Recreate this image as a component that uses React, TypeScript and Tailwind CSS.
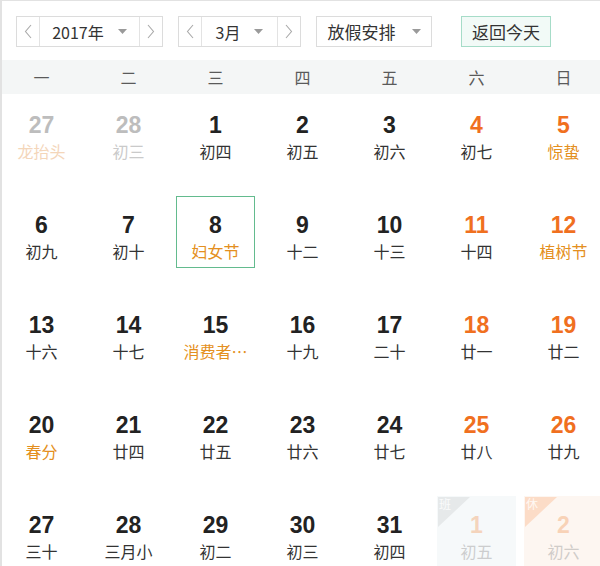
import React from "react";

type Day = {
  n: number;
  lunar: string;
  other?: boolean; // day of prev/next month
  fest?: boolean; // lunar text is a festival / solar term
  weekend?: boolean;
  selected?: boolean;
  badge?: "班" | "休";
};

const weekdays = ["一", "二", "三", "四", "五", "六", "日"];

const rows: Day[][] = [
  [
    { n: 27, lunar: "龙抬头", other: true, fest: true },
    { n: 28, lunar: "初三", other: true },
    { n: 1, lunar: "初四" },
    { n: 2, lunar: "初五" },
    { n: 3, lunar: "初六" },
    { n: 4, lunar: "初七", weekend: true },
    { n: 5, lunar: "惊蛰", weekend: true, fest: true },
  ],
  [
    { n: 6, lunar: "初九" },
    { n: 7, lunar: "初十" },
    { n: 8, lunar: "妇女节", fest: true, selected: true },
    { n: 9, lunar: "十二" },
    { n: 10, lunar: "十三" },
    { n: 11, lunar: "十四", weekend: true },
    { n: 12, lunar: "植树节", weekend: true, fest: true },
  ],
  [
    { n: 13, lunar: "十六" },
    { n: 14, lunar: "十七" },
    { n: 15, lunar: "消费者…", fest: true },
    { n: 16, lunar: "十九" },
    { n: 17, lunar: "二十" },
    { n: 18, lunar: "廿一", weekend: true },
    { n: 19, lunar: "廿二", weekend: true },
  ],
  [
    { n: 20, lunar: "春分", fest: true },
    { n: 21, lunar: "廿四" },
    { n: 22, lunar: "廿五" },
    { n: 23, lunar: "廿六" },
    { n: 24, lunar: "廿七" },
    { n: 25, lunar: "廿八", weekend: true },
    { n: 26, lunar: "廿九", weekend: true },
  ],
  [
    { n: 27, lunar: "三十" },
    { n: 28, lunar: "三月小" },
    { n: 29, lunar: "初二" },
    { n: 30, lunar: "初三" },
    { n: 31, lunar: "初四" },
    { n: 1, lunar: "初五", other: true, weekend: true, badge: "班" },
    { n: 2, lunar: "初六", other: true, weekend: true, badge: "休" },
  ],
];

const Chevron = ({ dir }: { dir: "left" | "right" }) => (
  <svg width="8" height="15" viewBox="0 0 8 15" fill="none">
    <polyline
      points={dir === "left" ? "7,1 1.5,7.5 7,14" : "1,1 6.5,7.5 1,14"}
      stroke="#a9a9a9"
      strokeWidth="1.1"
    />
  </svg>
);

const Caret = () => (
  <svg width="9" height="5" viewBox="0 0 9 5">
    <polygon points="0,0 9,0 4.5,5" fill="#9a9a9a" />
  </svg>
);

const Picker = ({ label, textW }: { label: string; textW: string }) => (
  <div className="flex h-[31px] border border-[#dcdcdc] bg-white">
    <div className="flex w-[23px] items-center justify-center border-r border-[#e3e3e3]">
      <Chevron dir="left" />
    </div>
    <div className={`flex items-center justify-center gap-[14px] ${textW}`}>
      <span className="text-[16px] text-[#333]">{label}</span>
      <Caret />
    </div>
    <div className="flex w-[23px] items-center justify-center border-l border-[#e3e3e3]">
      <Chevron dir="right" />
    </div>
  </div>
);

const DayCell = ({ d }: { d: Day }) => {
  let numColor = "text-[#222]";
  let lunarColor = "text-[#333]";
  if (d.weekend) numColor = "text-[#f0701f]";
  if (d.fest) lunarColor = "text-[#e48f20]";
  if (d.other && !d.badge) {
    numColor = "text-[#bdbdbd]";
    lunarColor = d.fest ? "text-[#f4d6ba]" : "text-[#cacaca]";
  }

  let box = "border-transparent";
  if (d.selected) box = "border-[#63bb8e]";
  if (d.badge === "班") box = "border-transparent bg-[#f6f9fa]";
  if (d.badge === "休") box = "border-transparent bg-[#fdf6f1]";

  return (
    <div className="h-[100px]">
      <div className={`relative mx-[4px] mt-[2px] h-[72px] border ${box}`}>
        {d.badge && (
          <div
            className={`absolute left-0 top-0 h-[30px] w-[32px] ${
              d.badge === "班" ? "bg-[#e6e9ea]" : "bg-[#fcdcc7]"
            } [clip-path:polygon(0_0,100%_0,0_100%)]`}
          >
            <span className="absolute left-[1px] top-[-2px] text-[12px] text-white/80">
              {d.badge}
            </span>
          </div>
        )}
        <div className={`flex flex-col items-center pt-[14px] ${d.badge ? "opacity-45" : ""}`}>
          <div
            className={`font-['Liberation_Sans',sans-serif] text-[23px] font-bold leading-[28px] ${
              d.badge ? "text-[#f3a873]" : numColor
            }`}
          >
            {d.n}
          </div>
          <div
            className={`whitespace-nowrap text-[16px] leading-[24px] ${
              d.badge ? "text-[#9a9a9a]" : lunarColor
            }`}
          >
            {d.lunar}
          </div>
        </div>
      </div>
    </div>
  );
};

export default function App() {
  return (
    <div className="h-[566px] w-[600px] overflow-hidden border-l-2 border-t border-[#e2e2e2] bg-white font-['Noto_Sans_CJK_SC','Noto_Sans',sans-serif]">
      {/* toolbar */}
      <div className="flex h-[59px] items-start gap-[15px] pl-[14px] pt-[15px]">
        <Picker label="2017年" textW="w-[99px]" />
        <Picker label="3月" textW="w-[75px]" />
        <div className="flex h-[31px] w-[116px] items-center justify-center gap-[16px] border border-[#dcdcdc] bg-white">
          <span className="text-[17px] text-[#333]">放假安排</span>
          <Caret />
        </div>
        <div className="ml-[14px] flex h-[31px] w-[90px] items-center justify-center border border-[#a6dcc8] bg-[#f2faf7]">
          <span className="text-[17px] text-[#333]">返回今天</span>
        </div>
      </div>

      <div className="-ml-[4px] w-[609px]">
        {/* weekday header */}
        <div className="grid h-[34px] grid-cols-7 bg-[#f4f6f6]">
          {weekdays.map((w) => (
            <div key={w} className="flex items-center justify-center text-[16px] text-[#5a5a5a]">
              {w}
            </div>
          ))}
        </div>

        {/* days */}
        <div className="grid grid-cols-7">
          {rows.flat().map((d, i) => (
            <DayCell key={i} d={d} />
          ))}
        </div>
      </div>
    </div>
  );
}
